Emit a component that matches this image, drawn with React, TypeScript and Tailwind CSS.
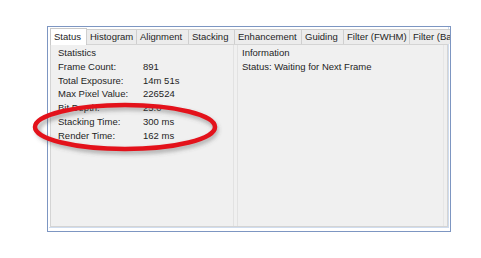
import React from "react";

const tabs = [
  { label: "Status", w: 37 },
  { label: "Histogram", w: 51 },
  { label: "Alignment", w: 53 },
  { label: "Stacking", w: 47 },
  { label: "Enhancement", w: 68 },
  { label: "Guiding", w: 43 },
  { label: "Filter (FWHM)", w: 67 },
  { label: "Filter (Bahtinov)", w: 80 },
];

const rows: [string, string][] = [
  ["Frame Count:", "891"],
  ["Total Exposure:", "14m 51s"],
  ["Max Pixel Value:", "226524"],
  ["Bit Depth:", "25.0"],
  ["Stacking Time:", "300 ms"],
  ["Render Time:", "162 ms"],
];

export default function App() {
  return (
    <div
      className="relative w-[481px] h-[258px] bg-white overflow-hidden text-[#1e1e1e]"
      style={{ fontFamily: '"Liberation Sans", Arial, sans-serif' }}
    >
      <div className="ml-[47px] pt-[26px]">
        <div className="w-[404px] h-[206px] border border-[#7d96c2] bg-white flex flex-col overflow-hidden">
          <div className="flex-1 flex flex-col border-b border-r border-[#cfdcee] mr-px mb-[3px] ml-px">
            {/* tab strip */}
            <div className="h-[17px] flex items-end pl-[1px] shrink-0 relative z-10">
              {tabs.map((t, i) => {
                const sel = i === 0;
                return (
                  <div
                    key={t.label}
                    style={{ width: t.w, minWidth: t.w }}
                    className={
                      sel
                        ? "h-[17px] -mb-px border border-b-0 border-[#c9c9c9] bg-white text-[9.5px] leading-[15px] pl-[3px] whitespace-nowrap overflow-hidden"
                        : "h-[15px] -ml-px border border-b-0 border-[#cfcfcf] bg-[#ececec] text-[9.5px] leading-[14px] pl-[3px] whitespace-nowrap overflow-hidden"
                    }
                  >
                    {t.label}
                  </div>
                );
              })}
            </div>
            {/* tab page */}
            <div className="flex-1 flex border border-[#d4d4d4] bg-[#f0f0f0] ml-px text-[9.5px] leading-[13.8px]">
              <div className="w-[183px] pt-[1px] pl-[7px] border-r border-[#e2e2e2] mr-[3px]">
                <div>Statistics</div>
                {rows.map(([k, v]) => (
                  <div key={k} className="flex">
                    <div className="w-[85px]">{k}</div>
                    <div>{v}</div>
                  </div>
                ))}
              </div>
              <div className="flex-1 pt-[1px] pl-[4px] border-l border-[#e2e2e2]">
                <div>Information</div>
                <div>Status: Waiting for Next Frame</div>
              </div>
              <div className="w-[4px] border-l border-[#e6e6e6]" />
            </div>
          </div>
        </div>
      </div>
      <svg
        className="absolute left-0 top-0 pointer-events-none"
        width="481"
        height="258"
        viewBox="0 0 481 258"
      >
        <defs>
          <filter id="sh" x="-20%" y="-50%" width="140%" height="200%">
            <feGaussianBlur stdDeviation="2" />
          </filter>
        </defs>
        <ellipse cx="127" cy="130" rx="89" ry="22" fill="none" stroke="#555" strokeOpacity="0.45" strokeWidth="4.5" filter="url(#sh)" />
        <ellipse cx="125" cy="127" rx="90" ry="22" fill="none" stroke="#e3121b" strokeWidth="4.5" />
      </svg>
    </div>
  );
}
